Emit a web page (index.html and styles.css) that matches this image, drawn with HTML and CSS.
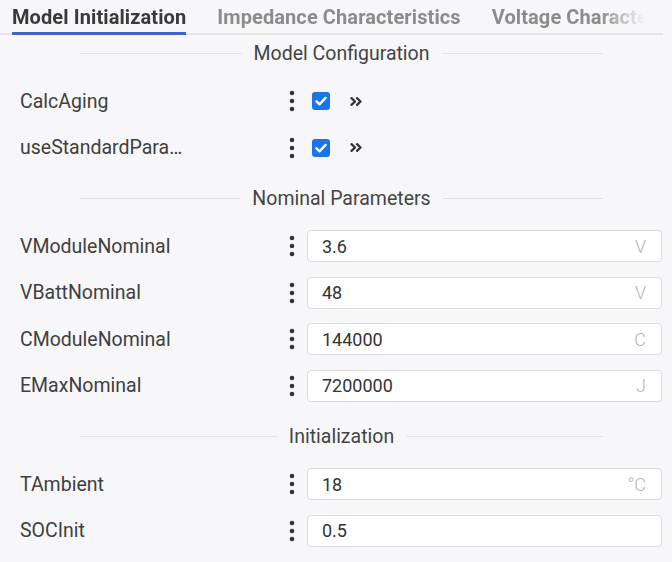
FILE: index.html
```html
<!DOCTYPE html>
<html lang="en">
<head>
<meta charset="utf-8">
<title>Model Initialization</title>
<link rel="stylesheet" href="styles.css">
</head>
<body>
<nav class="tabs">
  <div class="tab-list">
    <div class="tab active">Model Initialization</div>
    <div class="tab">Impedance Characteristics</div>
    <div class="tab">Voltage Characteristics</div>
  </div>
</nav>

<main class="panel">
  <section class="group">
    <h3 class="group-title"><span>Model Configuration</span></h3>
    <div class="fields">
      <div class="field">
        <div class="label"><span class="label-text">CalcAging</span></div>
        <span class="kebab"><svg viewBox="0 0 6 22" width="6" height="22"><circle cx="3" cy="3" r="2.3"/><circle cx="3" cy="11" r="2.3"/><circle cx="3" cy="19" r="2.3"/></svg></span>
        <div class="control check">
          <span class="checkbox"><svg viewBox="0 0 18 18" width="18" height="18"><path d="M4.5 9.3 L7.6 12.3 L13.6 5.9"/></svg></span>
          <svg class="expand" viewBox="0 0 12 9" width="12" height="9"><path d="M1.5 1.2 L5 4.5 L1.5 7.8 M7 1.2 L10.5 4.5 L7 7.8"/></svg>
        </div>
      </div>
      <div class="field">
        <div class="label"><span class="label-text">useStandardParameters</span></div>
        <span class="kebab"><svg viewBox="0 0 6 22" width="6" height="22"><circle cx="3" cy="3" r="2.3"/><circle cx="3" cy="11" r="2.3"/><circle cx="3" cy="19" r="2.3"/></svg></span>
        <div class="control check">
          <span class="checkbox"><svg viewBox="0 0 18 18" width="18" height="18"><path d="M4.5 9.3 L7.6 12.3 L13.6 5.9"/></svg></span>
          <svg class="expand" viewBox="0 0 12 9" width="12" height="9"><path d="M1.5 1.2 L5 4.5 L1.5 7.8 M7 1.2 L10.5 4.5 L7 7.8"/></svg>
        </div>
      </div>
    </div>
  </section>

  <section class="group">
    <h3 class="group-title"><span>Nominal Parameters</span></h3>
    <div class="fields">
      <div class="field">
        <div class="label"><span class="label-text">VModuleNominal</span></div>
        <span class="kebab"><svg viewBox="0 0 6 22" width="6" height="22"><circle cx="3" cy="3" r="2.3"/><circle cx="3" cy="11" r="2.3"/><circle cx="3" cy="19" r="2.3"/></svg></span>
        <label class="control input"><input type="text" value="3.6"><span class="unit">V</span></label>
      </div>
      <div class="field">
        <div class="label"><span class="label-text">VBattNominal</span></div>
        <span class="kebab"><svg viewBox="0 0 6 22" width="6" height="22"><circle cx="3" cy="3" r="2.3"/><circle cx="3" cy="11" r="2.3"/><circle cx="3" cy="19" r="2.3"/></svg></span>
        <label class="control input"><input type="text" value="48"><span class="unit">V</span></label>
      </div>
      <div class="field">
        <div class="label"><span class="label-text">CModuleNominal</span></div>
        <span class="kebab"><svg viewBox="0 0 6 22" width="6" height="22"><circle cx="3" cy="3" r="2.3"/><circle cx="3" cy="11" r="2.3"/><circle cx="3" cy="19" r="2.3"/></svg></span>
        <label class="control input"><input type="text" value="144000"><span class="unit">C</span></label>
      </div>
      <div class="field">
        <div class="label"><span class="label-text">EMaxNominal</span></div>
        <span class="kebab"><svg viewBox="0 0 6 22" width="6" height="22"><circle cx="3" cy="3" r="2.3"/><circle cx="3" cy="11" r="2.3"/><circle cx="3" cy="19" r="2.3"/></svg></span>
        <label class="control input"><input type="text" value="7200000"><span class="unit">J</span></label>
      </div>
    </div>
  </section>

  <section class="group">
    <h3 class="group-title"><span>Initialization</span></h3>
    <div class="fields">
      <div class="field">
        <div class="label"><span class="label-text">TAmbient</span></div>
        <span class="kebab"><svg viewBox="0 0 6 22" width="6" height="22"><circle cx="3" cy="3" r="2.3"/><circle cx="3" cy="11" r="2.3"/><circle cx="3" cy="19" r="2.3"/></svg></span>
        <label class="control input"><input type="text" value="18"><span class="unit">°C</span></label>
      </div>
      <div class="field">
        <div class="label"><span class="label-text">SOCInit</span></div>
        <span class="kebab"><svg viewBox="0 0 6 22" width="6" height="22"><circle cx="3" cy="3" r="2.3"/><circle cx="3" cy="11" r="2.3"/><circle cx="3" cy="19" r="2.3"/></svg></span>
        <label class="control input"><input type="text" value="0.5"></label>
      </div>
    </div>
  </section>
</main>
</body>
</html>
```

FILE: styles.css
```css
* {
  box-sizing: border-box;
}

body {
  margin: 0;
  background: #f7f7f9;
  font-family: Roboto, "Noto Sans", sans-serif;
  color: #404040;
  overflow: hidden;
}

/* ---- tab strip ---- */
.tabs {
  width: 663px;
  height: 35px;
  background: linear-gradient(#e6e6e9, #e6e6e9) left bottom / 100% 2px no-repeat;
}

.tab-list {
  display: flex;
  gap: 31px;
  height: 35px;
  padding-left: 12px;
  overflow: hidden;
  white-space: nowrap;
  -webkit-mask-image: linear-gradient(to right, #000 600px, transparent 645px);
  mask-image: linear-gradient(to right, #000 600px, transparent 645px);
}

.tab {
  height: 35px;
  line-height: 35px;
  font-size: 20px;
  letter-spacing: 0.1px;
  font-weight: 700;
  color: #8c8c8c;
}

.tab.active {
  color: #3a3a3a;
  border-bottom: 3px solid #4262c8;
}

/* ---- parameter panel ---- */
.panel {
  padding: 0 10px 0 20px;
}

.group + .group {
  margin-top: 9px;
}

.group-title {
  margin: 0;
  height: 36px;
  display: flex;
  align-items: center;
  gap: 12px;
  padding: 0 59px 0 60px;
  font-size: 19.5px;
  font-weight: 400;
  color: #444;
}

.group-title::before,
.group-title::after {
  content: "";
  flex: 1;
  height: 1px;
  background: #e3e3e7;
}

.fields {
  padding-top: 7px;
}

.field {
  height: 46.5px;
  display: flex;
  align-items: center;
}

.label {
  width: 264px;
  flex: none;
  font-size: 19.5px;
  color: #404040;
}

.label-text {
  display: block;
  max-width: 172px;
  overflow: hidden;
  white-space: nowrap;
  text-overflow: ellipsis;
}

.kebab {
  width: 15px;
  flex: none;
  display: flex;
  justify-content: center;
  margin-right: 8px;
}

.kebab svg {
  fill: #333;
}

.control {
  flex: 1;
  display: flex;
  align-items: center;
}

.check {
  padding-left: 5px;
  gap: 20px;
}

.checkbox {
  width: 18px;
  height: 18px;
  border-radius: 3px;
  background: #1b74e8;
  display: flex;
}

.checkbox path {
  fill: none;
  stroke: #fff;
  stroke-width: 2.4;
  stroke-linecap: round;
  stroke-linejoin: round;
}

.expand path {
  fill: none;
  stroke: #333;
  stroke-width: 2.3;
  stroke-linecap: round;
  stroke-linejoin: round;
}

.input {
  height: 32px;
  background: #fff;
  border: 1px solid #dadadd;
  border-radius: 4px;
  padding: 0 15px 0 14px;
  font-size: 18px;
}

.input input {
  flex: 1;
  min-width: 0;
  border: none;
  outline: none;
  background: transparent;
  padding: 0;
  font: inherit;
  color: #333;
}

.unit {
  color: #b3b3b3;
  font-weight: 300;
}
```
